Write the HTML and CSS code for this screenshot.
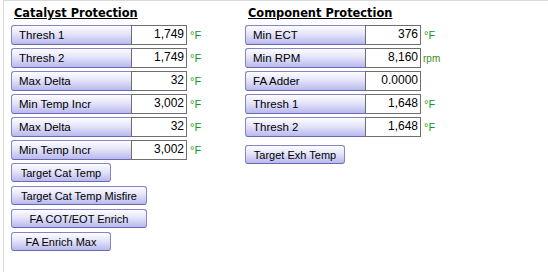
FILE: index.html
```html
<!DOCTYPE html>
<html lang="en">
<head>
<meta charset="UTF-8">
<title>Protection</title>
<link rel="stylesheet" href="styles.css">
</head>
<body>

<div class="panel">
    <div class="column column-left">
        <h2 class="title">Catalyst Protection</h2>
        <div class="rows">
            <div class="row"><span class="label">Thresh 1</span><span class="value">1,749</span><span class="unit">°F</span></div>
            <div class="row"><span class="label">Thresh 2</span><span class="value">1,749</span><span class="unit">°F</span></div>
            <div class="row"><span class="label">Max Delta</span><span class="value">32</span><span class="unit">°F</span></div>
            <div class="row"><span class="label">Min Temp Incr</span><span class="value">3,002</span><span class="unit">°F</span></div>
            <div class="row"><span class="label">Max Delta</span><span class="value">32</span><span class="unit">°F</span></div>
            <div class="row"><span class="label">Min Temp Incr</span><span class="value">3,002</span><span class="unit">°F</span></div>
        </div>
        <div class="buttons">
            <button class="btn btn-short">Target Cat Temp</button>
            <button class="btn btn-long">Target Cat Temp Misfire</button>
            <button class="btn btn-long">FA COT/EOT Enrich</button>
            <button class="btn btn-short">FA Enrich Max</button>
        </div>
    </div>

    <div class="column column-right">
        <h2 class="title">Component Protection</h2>
        <div class="rows">
            <div class="row"><span class="label">Min ECT</span><span class="value">376</span><span class="unit">°F</span></div>
            <div class="row"><span class="label">Min RPM</span><span class="value">8,160</span><span class="unit unit-small">rpm</span></div>
            <div class="row"><span class="label">FA Adder</span><span class="value">0.0000</span></div>
            <div class="row"><span class="label">Thresh 1</span><span class="value">1,648</span><span class="unit">°F</span></div>
            <div class="row"><span class="label">Thresh 2</span><span class="value">1,648</span><span class="unit">°F</span></div>
        </div>
        <div class="buttons buttons-far">
            <button class="btn btn-short">Target Exh Temp</button>
        </div>
    </div>
</div>

</body>
</html>
```

FILE: styles.css
```css
body, html {
    margin: 0;
    padding: 0;
    background: #fff;
}

.panel {
    margin-left: 3px;
    height: 271px;
    border-left: 1px solid #d9d9d9;
    border-top: 1px solid #d9d9d9;
    display: flex;
    font-family: "Liberation Sans", Arial, sans-serif;
    font-size: 11px;
    color: #000;
}

.column {
    display: flex;
    flex-direction: column;
}

.column-left {
    margin-left: 7px;
    width: 234px;
}

.title {
    margin: 5px 0 0 3px;
    height: 19px;
    font-family: "DejaVu Sans", Verdana, sans-serif;
    font-size: 11.4px;
    font-weight: bold;
    text-decoration: underline;
    line-height: 14px;
}

.rows {
    display: flex;
    flex-direction: column;
    gap: 3px;
}

.row {
    display: flex;
    align-items: center;
    height: 20px;
}

.label {
    box-sizing: border-box;
    width: 120px;
    height: 20px;
    padding-left: 7px;
    line-height: 19px;
    font-size: 11.5px;
    border: 1px solid #8585c6;
    border-right: none;
    border-bottom-color: #6a6ab0;
    border-radius: 3px 0 0 3px;
    background: linear-gradient(#fdfdff 0%, #e4e4fa 45%, #b9b9ef 100%);
}

.value {
    box-sizing: border-box;
    width: 56px;
    height: 20px;
    padding-right: 2px;
    text-align: right;
    line-height: 16px;
    font-size: 12px;
    border: 1px solid #6e6e6e;
    background: #fff;
}

.unit {
    margin-left: 3px;
    color: #119a1a;
    font-size: 11px;
}

.unit-small {
    margin-left: 2px;
    font-size: 10px;
    color: #3e8a18;
}

.buttons {
    display: flex;
    flex-direction: column;
    align-items: flex-start;
    gap: 4px;
    margin-top: 3px;
}

.buttons-far {
    margin-top: 8px;
}

.btn {
    box-sizing: border-box;
    height: 19px;
    padding: 0;
    font-family: "Liberation Sans", Arial, sans-serif;
    font-size: 11px;
    color: #000;
    border: 1px solid #8585c6;
    border-bottom-color: #6a6ab0;
    border-radius: 3px;
    background: linear-gradient(#fdfdff 0%, #e4e4fa 45%, #b9b9ef 100%);
}

.btn-short {
    width: 100px;
}

.btn-long {
    width: 136px;
}
```
